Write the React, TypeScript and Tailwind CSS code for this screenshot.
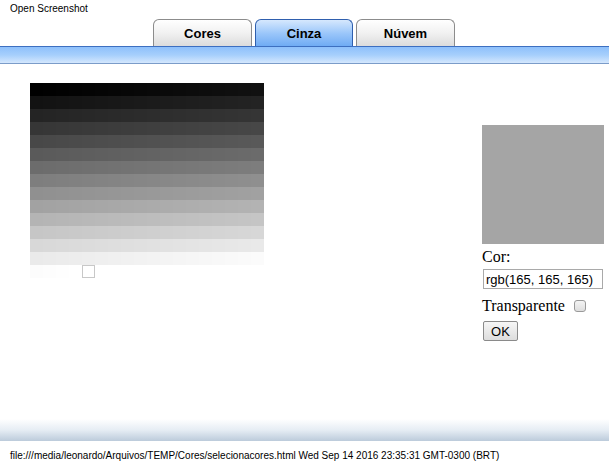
const cells = Array.from({ length: 256 }, (_, i) => i)

function Tab({ label, active }: { label: string; active?: boolean }) {
  return (
    <div
      className={
        active
          ? 'w-[98px] h-[27px] flex items-center justify-center rounded-t-[6px] border border-b-0 border-[#2f5fae] bg-gradient-to-b from-[#d6e8fd] via-[#9cc7fa] to-[#6fabf4] text-[13px] font-bold text-black'
          : 'w-[99px] h-[27px] flex items-center justify-center rounded-t-[6px] border border-b-0 border-[#8c8c8c] bg-gradient-to-b from-[#ffffff] via-[#f1f1f1] to-[#dcdcdc] text-[13px] font-bold text-black'
      }
    >
      <span className="mt-[1px]">{label}</span>
    </div>
  )
}

export default function App() {
  return (
    <div className="w-[609px] h-[462px] bg-white flex flex-col font-['Liberation_Sans',Arial,sans-serif] overflow-hidden">
      {/* top header */}
      <div className="h-[20px] pl-[10px] pt-[3px] text-[10px] leading-[12px] text-black">Open Screenshot</div>
      <div className="flex gap-[3px] pl-[153px] h-[26px] items-end">
        <Tab label="Cores" />
        <Tab label="Cinza" active />
        <Tab label="Núvem" />
      </div>
      <div className="h-[18px] border-t border-[#3d6fc0] bg-gradient-to-b from-[#8ec0fb] via-[#a6cffc] to-[#d4e7fd] border-b border-b-[#7b9cc9]" />

      {/* content */}
      <div className="flex flex-1">
        <div className="pl-[30px] pt-[19px] w-[482px]">
          <div className="grid grid-cols-[repeat(18,13px)] auto-rows-[13px]">
            {cells.map((v) => (
              <div key={v} style={{ backgroundColor: `rgb(${v}, ${v}, ${v})` }} />
            ))}
            <div className="border border-[#c8c8c8] bg-white" />
          </div>
        </div>
        <div className="pt-[61px] flex flex-col font-['Liberation_Serif','Times_New_Roman',serif] text-[16px] text-black">
          <div className="w-[122px] h-[119px] bg-[#a5a5a5]" />
          <div className="mt-[4px] leading-[18px]">Cor:</div>
          <input
            readOnly
            value="rgb(165, 165, 165)"
            className="mt-[3px] ml-[1px] w-[120px] h-[20px] border border-[#a9a9a9] px-[2px] text-[13px] font-['Liberation_Sans',Arial,sans-serif] outline-none"
          />
          <div className="mt-[8px] flex items-center leading-[18px]">
            Transparente
            <span className="ml-[9px] w-[12px] h-[12px] rounded-[3px] border border-[#9a9a9a] bg-gradient-to-b from-[#f4f4f4] to-[#dedede]" />
          </div>
          <button className="mt-[6px] ml-[1px] w-[35px] h-[20px] border border-[#8a8a8a] rounded-[2px] bg-gradient-to-b from-[#f6f6f6] to-[#dddddd] text-[13px] font-['Liberation_Sans',Arial,sans-serif] leading-none">
            OK
          </button>
        </div>
      </div>

      {/* footer */}
      <div className="h-[22px] bg-gradient-to-b from-[#ffffff] via-[#e6edf4] to-[#bccbdb]" />
      <div className="h-[21px] pl-[10px] pt-[9px] text-[10px] leading-[12px] text-black">
        file:///media/leonardo/Arquivos/TEMP/Cores/selecionacores.html Wed Sep 14 2016 23:35:31 GMT-0300 (BRT)
      </div>
    </div>
  )
}
